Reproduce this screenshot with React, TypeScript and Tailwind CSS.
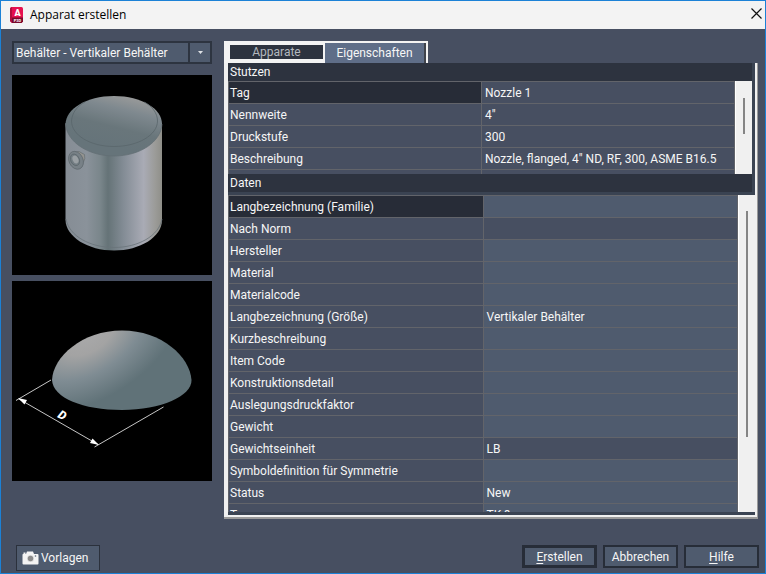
import React, { useState } from "react";

type Row = { label: string; value?: string; editable?: boolean };

const nozzleRows: Row[] = [
  { label: "Tag", value: "Nozzle 1", editable: true },
  { label: "Nennweite", value: '4"', editable: true },
  { label: "Druckstufe", value: "300", editable: true },
  { label: "Beschreibung", value: 'Nozzle, flanged, 4" ND, RF, 300, ASME B16.5', editable: true },
  { label: "", editable: true },
];

const dataRows: Row[] = [
  { label: "Langbezeichnung (Familie)" },
  { label: "Nach Norm", editable: true },
  { label: "Hersteller" },
  { label: "Material" },
  { label: "Materialcode" },
  { label: "Langbezeichnung (Größe)", value: "Vertikaler Behälter" },
  { label: "Kurzbeschreibung" },
  { label: "Item Code" },
  { label: "Konstruktionsdetail" },
  { label: "Auslegungsdruckfaktor" },
  { label: "Gewicht" },
  { label: "Gewichtseinheit", value: "LB", editable: true },
  { label: "Symboldefinition für Symmetrie" },
  { label: "Status", value: "New" },
  { label: "Typ", value: "TK-?" },
];

export default function App() {
  const [tab, setTab] = useState("Eigenschaften");

  return (
    <div className="flex h-screen flex-col border border-[#1b81d6] bg-[#474f61] font-['Roboto','Liberation_Sans',sans-serif] text-xs text-[#f6f6f6]">
      <header className="flex h-7 shrink-0 items-center bg-[#f3f3f3] pl-2 pr-[3px] text-black">
        <AppLogo />
        <h1 className="ml-1.5 flex-1 font-['Open_Sans','Noto_Sans',sans-serif] text-xs">Apparat erstellen</h1>
        <button type="button" aria-label="Schließen" className="pb-1">
          <svg width="11" height="11" viewBox="0 0 11 11" stroke="#111" strokeWidth="1.2">
            <path d="M.5 .5l10 10M10.5 .5l-10 10" />
          </svg>
        </button>
      </header>

      <main className="flex min-h-0 flex-1 gap-3 pl-[11px] pr-[7px] pt-3">
        <aside className="flex w-[200px] shrink-0 flex-col">
          <div className="relative">
            <select
              aria-label="Apparatetyp"
              className="block h-[23px] w-full appearance-none rounded-none border-2 border-[#2d3440] bg-[#4f5b6e] pl-0.5 pr-6 text-xs"
            >
              <option>Behälter - Vertikaler Behälter</option>
            </select>
            <span className="pointer-events-none absolute inset-y-0 right-0 flex w-6 items-center justify-center border-x-2 border-[#2d3440]">
              <svg width="5" height="3" viewBox="0 0 5 3" fill="#dfe2e6">
                <path d="M0 0h5L2.5 3z" />
              </svg>
            </span>
          </div>
          <div className="mt-[11px] flex flex-col gap-1.5">
            <VesselPreview />
            <HeadPreview />
          </div>
        </aside>

        <section className="flex min-h-0 min-w-0 flex-1 flex-col">
          <div role="tablist" className="flex h-[22px] shrink-0 self-start bg-[#f3f3f3] pr-0.5 pt-0.5">
            <TabButton name="Apparate" active={tab === "Apparate"} onClick={setTab} />
            <TabButton name="Eigenschaften" active={tab === "Eigenschaften"} onClick={setTab} />
          </div>

          <div className="flex min-h-0 flex-1 flex-col border-b-2 border-r border-[#9a9a9a]">
            <div className="flex min-h-0 flex-1 flex-col border-b-2 border-l-4 border-r-2 border-[#f0f0f0] bg-[#3a4352]">
              <div className="pr-[3px]">
                <GroupTitle>Stutzen</GroupTitle>
                <div className="flex h-[93px]">
                  <PropertyTable caption="Stutzen" rows={nozzleRows} />
                  <ScrollBar thumb="mt-[17px] h-9" />
                </div>
                <GroupTitle>Daten</GroupTitle>
              </div>
              <div className="mb-[3px] mt-[3px] flex min-h-0 flex-1">
                <PropertyTable caption="Daten" rows={dataRows} />
                <ScrollBar thumb="mt-4 h-[226px]" />
              </div>
            </div>
          </div>
        </section>
      </main>

      <footer className="flex shrink-0 items-start justify-between pb-0.5 pl-[15px] pr-1.5 pt-[26px]">
        <button type="button" className="flex h-[26px] w-[84px] items-center gap-0.5 border border-[#2b313c] bg-[#4f5b6e] pl-[5px]">
          <CameraIcon />
          Vorlagen
        </button>
        <div className="flex gap-1.5">
          <button type="button" className="h-[23px] w-[75px] border-[3px] border-[#272d38] bg-[#4f5b6e] leading-4">
            <span className="underline underline-offset-2">E</span>rstellen
          </button>
          <button type="button" className="h-[23px] w-[75px] border-2 border-[#272d38] bg-[#4f5b6e] leading-4">
            Abbrechen
          </button>
          <button type="button" className="h-[23px] w-[75px] border-2 border-[#272d38] bg-[#4f5b6e] leading-4">
            <span className="underline underline-offset-2">H</span>ilfe
          </button>
        </div>
      </footer>
    </div>
  );
}

function TabButton({ name, active, onClick }: { name: string; active: boolean; onClick: (name: string) => void }) {
  return active ? (
    <button
      type="button"
      role="tab"
      aria-selected
      onClick={() => onClick(name)}
      className="h-5 w-[101px] border-r-2 border-[#3f434b] bg-[#5f6e88]"
    >
      {name}
    </button>
  ) : (
    <button
      type="button"
      role="tab"
      aria-selected={false}
      onClick={() => onClick(name)}
      className="ml-1.5 mr-0.5 mt-0.5 h-3.5 w-[93px] bg-[#2d333f] leading-3.5 text-[#b4b8be]"
    >
      {name}
    </button>
  );
}

function GroupTitle({ children }: { children: React.ReactNode }) {
  return <h2 className="h-[18px] bg-[#2d333f] pl-0.5 leading-[18px]">{children}</h2>;
}

function PropertyTable({ caption, rows }: { caption: string; rows: Row[] }) {
  return (
    <div className="min-w-0 flex-1 overflow-hidden border-l border-r border-[#62646a]">
      <table aria-label={caption} className="w-full table-fixed border-collapse text-left">
        <tbody>
          {rows.map((row, i) => (
            <tr key={i} className="h-[22px] border-t border-[#62646a]">
              <th
                scope="row"
                className={`border-r border-[#62646a] p-0 pl-px font-normal whitespace-nowrap ${i === 0 ? "bg-[#272c37]" : "bg-[#474f61]"}`}
              >
                {row.label}
              </th>
              <td className={`p-0 pl-[3px] whitespace-nowrap ${row.editable ? "bg-[#474f61]" : "bg-[#4f5b6e]"}`}>{row.value}</td>
            </tr>
          ))}
        </tbody>
      </table>
    </div>
  );
}

function ScrollBar({ thumb }: { thumb: string }) {
  return (
    <div className="flex w-[17px] shrink-0 items-start justify-center border-l border-white bg-[#f0f0f0]">
      <div className={`w-0.5 bg-[#858585] ${thumb}`} />
    </div>
  );
}

function AppLogo() {
  return (
    <svg width="15" height="16" viewBox="0 0 15 16" aria-hidden="true">
      <path d="M1 1.5Q1 0 2.500 0H12.500Q14 0 14 1.500V14.500L12.500 16H3L1 14z" fill="#e5104f" />
      <path d="M1 1.500L3 0V16L1 14z" fill="#b00d3d" />
      <path d="M3 10.500H14V14.500L12.500 16H3z" fill="#7a0a2c" />
      <text x="8.500" y="9" textAnchor="middle" fontSize="9" fontWeight="900" fill="#fff">A</text>
      <text x="8.500" y="15" textAnchor="middle" fontSize="4" fontWeight="700" fill="#fff">P3D</text>
    </svg>
  );
}

function CameraIcon() {
  return (
    <svg width="17" height="14" viewBox="0 0 17 14" aria-hidden="true">
      <path d="M1 3H4L5 .5H11L12 3H15.500Q16.500 3 16.500 4V12.500Q16.500 13.500 15.500 13.500H1.500Q.5 13.500 .5 12.500V3.500z" fill="#f4f4f4" />
      <path d="M1.500 1.500H3.500V3H1.500z" fill="#f4f4f4" />
      <circle cx="8.500" cy="7.500" r="3.500" fill="#dcdcdc" />
      <circle cx="8.500" cy="7.500" r="2.700" fill="#8b8b8b" />
      <circle cx="13.500" cy="5" r=".8" fill="#5a6577" />
    </svg>
  );
}

function VesselPreview() {
  return (
    <svg viewBox="0 0 200 200" className="block w-full bg-black" role="img" aria-label="Behälter">
      <defs>
        <linearGradient id="shell" x1="0" x2="1">
          <stop offset="0" stopColor="#868d95" />
          <stop offset=".22" stopColor="#8a929a" />
          <stop offset=".36" stopColor="#7a868b" />
          <stop offset=".44" stopColor="#657377" />
          <stop offset=".6" stopColor="#838c95" />
          <stop offset=".81" stopColor="#a9abb5" />
          <stop offset=".93" stopColor="#9b9b98" />
          <stop offset="1" stopColor="#8f8f89" />
        </linearGradient>
        <linearGradient id="lid" x1=".72" y1="0" x2=".4" y2=".8">
          <stop offset="0" stopColor="#9c9c9b" />
          <stop offset=".3" stopColor="#7f898f" />
          <stop offset=".65" stopColor="#69767b" />
          <stop offset="1" stopColor="#66747a" />
        </linearGradient>
      </defs>
      <path d="M53.500 48V145C54 162 76 175.500 102 175.500S150 162 150 145V48z" fill="url(#shell)" />
      <path d="M54 144C57 161 78 172.500 102 172.500S147 161 150 144" fill="none" stroke="#69747a" strokeWidth=".8" />
      <path d="M53.500 49C54 34 74 21 102 21S150 34 150 49C149 67 128 81 102 81S55 67 53.500 49z" fill="url(#lid)" />
      <path d="M59.500 46C59.500 60 78 71.500 102 71.500S145.500 60 145.500 46C145.500 38 140 31 132 27" fill="none" stroke="#59666b" strokeWidth=".8" />
      <path d="M59.500 46C60 38 65 31 73 27" fill="none" stroke="#59666b" strokeWidth=".8" />
      <path d="M53.500 49C55 67 76 81 102 81S149 67 150 49" fill="none" stroke="#626d73" strokeWidth=".7" />
      <path d="M62 77L67 76.500L72.500 79.500Q73.500 84 71.500 87L67 91z" fill="#93938f" stroke="#666e73" strokeWidth=".7" />
      <ellipse cx="64" cy="85.300" rx="7" ry="9.300" transform="rotate(-25 64 85.300)" fill="#788187" stroke="#626b70" strokeWidth=".8" />
      <ellipse cx="63" cy="84.800" rx="4.300" ry="6" transform="rotate(-25 63 84.800)" fill="#737d83" stroke="#5c666c" strokeWidth=".8" />
      <ellipse cx="63.500" cy="84.500" rx="2.800" ry="4" transform="rotate(-25 63.500 84.500)" fill="#999fa3" />
    </svg>
  );
}

function HeadPreview() {
  return (
    <svg viewBox="0 0 200 200" className="block w-full bg-black" role="img" aria-label="Boden mit Durchmesser D">
      <defs>
        <radialGradient id="dome" gradientUnits="userSpaceOnUse" cx="72" cy="48" r="105" gradientTransform="rotate(-32 72 48) translate(0 24) scale(1 .62)">
          <stop offset="0" stopColor="#a9a9aa" />
          <stop offset=".28" stopColor="#a3a3a3" />
          <stop offset=".6" stopColor="#7f8c93" />
          <stop offset="1" stopColor="#607278" />
        </radialGradient>
      </defs>
      <path d="M40 99C41 76 70 49.500 110 49.500S178 76 179.500 99C180 115 149 129 110 129S41 117 40 99z" fill="url(#dome)" />
      <g stroke="#dcdcdc" strokeWidth=".9" fill="none">
        <path d="M4 119.500L39 99" />
        <path d="M82.500 166L151.500 126" />
        <path d="M7 118L86 163.500" />
      </g>
      <path d="M6 117L15 119L12.500 123.500z" fill="#fff" />
      <path d="M87 164L78 162L80.500 157.500z" fill="#fff" />
      <text x="45" y="136" fontSize="12" fontWeight="900" fontStyle="italic" fill="#fff" transform="rotate(29 45 136)">
        D
      </text>
    </svg>
  );
}
